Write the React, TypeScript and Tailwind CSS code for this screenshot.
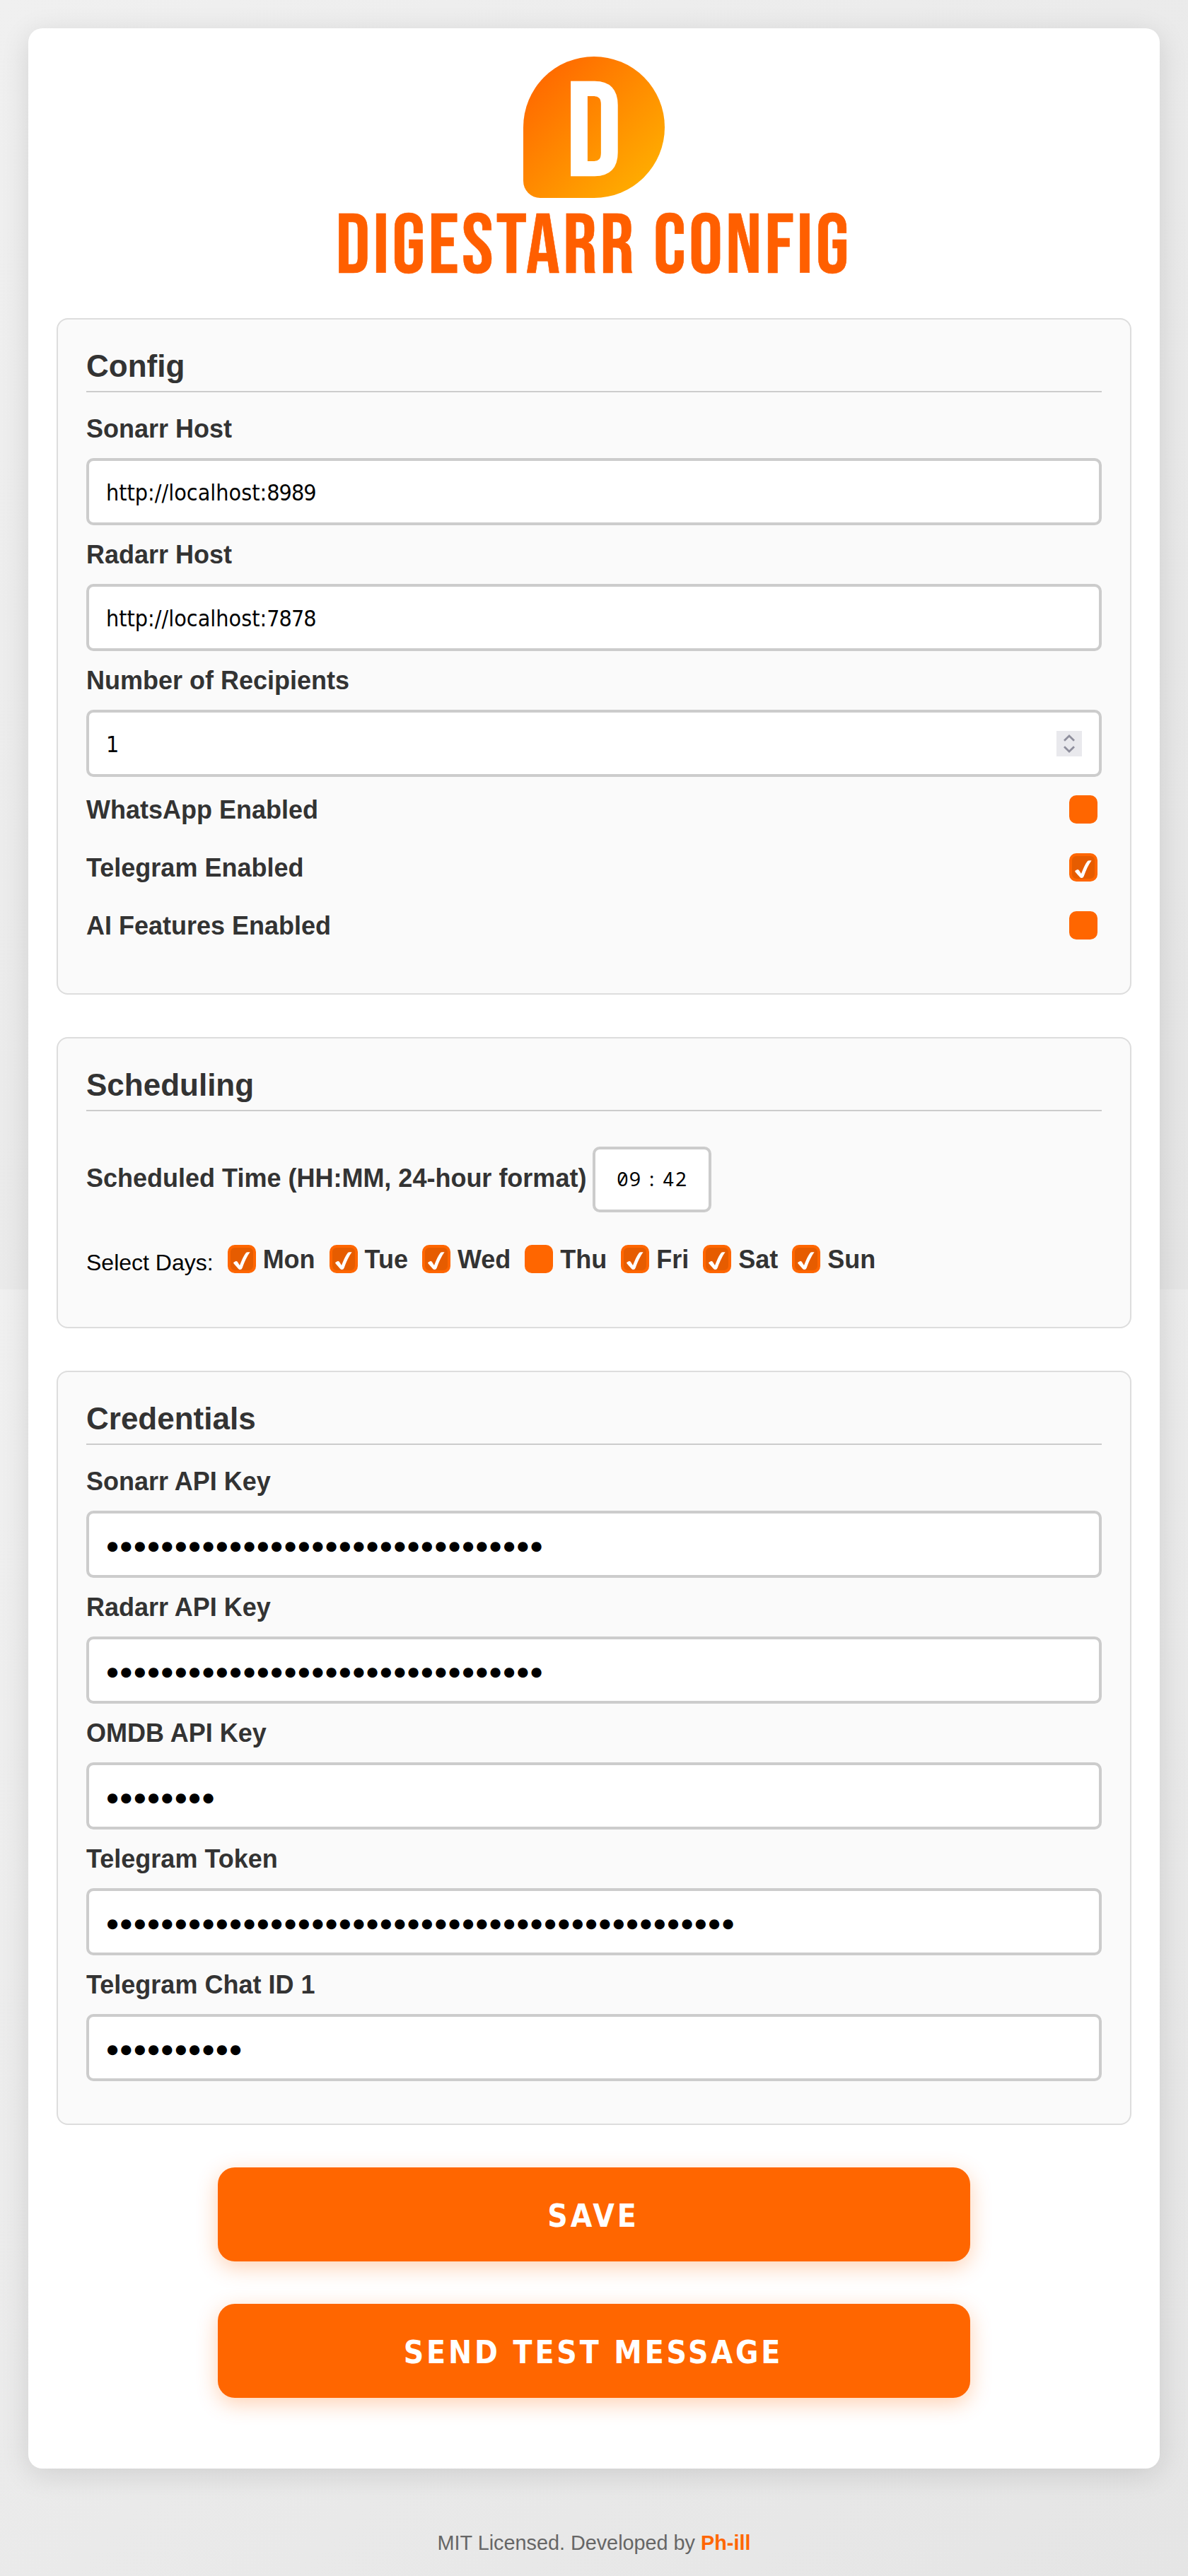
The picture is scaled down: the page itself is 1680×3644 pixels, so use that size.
import type { ReactNode } from "react";

function Section({ title, children }: { title: string; children: ReactNode }) {
  return (
    <section className="rounded-2xl border-2 border-[#ddd] bg-[#fafafa] px-10 pt-[41px]">
      <h2 className="border-b-2 border-[#ccc] pb-2.5 text-[44px] leading-[50px] font-bold text-[#333]">{title}</h2>
      {children}
    </section>
  );
}

function Field({ label, children }: { label: string; children: ReactNode }) {
  return (
    <div className="flex flex-col gap-[21px]">
      <label className="text-[36px] leading-10 font-bold text-[#333]">{label}</label>
      <div className="flex h-[95px] items-center justify-between rounded-[10px] border-4 border-[#ccc] bg-white px-6 font-['DejaVu_Sans_Condensed','DejaVu_Sans',sans-serif] text-[32px] leading-10 text-black">
        {children}
      </div>
    </div>
  );
}

function Host({ base, port }: { base: string; port: string }) {
  return (
    <span className="pt-[3px]">
      {base}
      <span className="tracking-[-0.9px]">{port}</span>
    </span>
  );
}

function Secret({ length }: { length: number }) {
  return (
    <span className="pt-1 pl-px font-['DejaVu_Sans',sans-serif] text-[18.5px] tracking-[3.2px]">{"●".repeat(length)}</span>
  );
}

function Stepper() {
  return (
    <svg className="size-9 bg-[#e9e9ed]" viewBox="0 0 36 36" fill="none" stroke="#8f8f9d" strokeWidth="2.8">
      <path d="M11 13.7 18 7l7 6.7" />
      <path d="M11 22.3 18 29l7-6.7" />
    </svg>
  );
}

function Check({ on }: { on: boolean }) {
  return (
    <span
      className={
        on
          ? "block size-10 rounded-[10px] border-4 border-[#f60] bg-[#e65c00]"
          : "block size-10 rounded-[10px] border-4 border-[#f60] bg-[#f60]"
      }
    >
      {on && (
        <svg className="size-8" viewBox="4 4 32 32" fill="#fff">
          <path d="M8.4 24.8 11 23.2Q13 22.6 14.2 24.5L17 29C19.7 22 22.3 15.7 25.6 11.4Q26.6 10.2 28.5 10.2L31.6 10.3C27.3 16 23.8 24 20.7 32.4Q19.8 35 17.5 35 16 35 15 33.8L8.6 26.4Q7.9 25.3 8.4 24.8Z" />
        </svg>
      )}
    </span>
  );
}

const toggles = [
  { label: "WhatsApp Enabled", on: false },
  { label: "Telegram Enabled", on: true },
  { label: "AI Features Enabled", on: false },
];

const days = [
  { label: "Mon", on: true },
  { label: "Tue", on: true },
  { label: "Wed", on: true },
  { label: "Thu", on: false },
  { label: "Fri", on: true },
  { label: "Sat", on: true },
  { label: "Sun", on: true },
];

const secrets = [
  { label: "Sonarr API Key", length: 32 },
  { label: "Radarr API Key", length: 32 },
  { label: "OMDB API Key", length: 8 },
  { label: "Telegram Token", length: 46 },
  { label: "Telegram Chat ID 1", length: 10 },
];

function ActionButton({ children }: { children: string }) {
  return (
    <button className="h-[133px] w-[1064px] rounded-3xl bg-[#f60] pt-[5px] pr-[2px] font-['DejaVu_Sans_Condensed','DejaVu_Sans',sans-serif] text-[44px] leading-none font-bold tracking-[3.9px] text-white shadow-[0_8px_30px_rgba(255,102,0,0.3)]">
      {children}
    </button>
  );
}

export default function App() {
  return (
    <div className="h-[3644px] w-[1680px] bg-[linear-gradient(135deg,#f0f0f0,#e5e5e5)] bg-[length:1680px_1824px] px-10 pt-10 font-['Liberation_Sans',Arial,sans-serif]">
      <main className="flex h-[3452px] flex-col rounded-[20px] bg-white px-10 pt-10 shadow-[0_8px_40px_rgba(0,0,0,0.12)]">
        <header className="flex h-[370px] flex-col items-center">
          <svg className="size-[200px] shrink-0" viewBox="0 0 200 200">
            <defs>
              <linearGradient id="badge" x1="0" y1="0" x2="1" y2="1">
                <stop offset="0" stopColor="#ff5f00" />
                <stop offset="1" stopColor="#ffb700" />
              </linearGradient>
            </defs>
            <path d="M100 0a100 100 0 0 1 0 200H24A24 24 0 0 1 0 176V100A100 100 0 0 1 100 0Z" fill="url(#badge)" />
            <text
              x="59"
              y="168"
              transform="scale(1.025 1)"
              fill="#fff"
              stroke="#fff"
              strokeWidth="2.5"
              fontSize="188"
              fontFamily="'Bebas Neue', Oswald, sans-serif"
            >
              D
            </text>
          </svg>
          <h1 className="mt-[10px] pr-px font-['Bebas_Neue',Oswald,sans-serif] text-[120px] leading-[120px] font-normal tracking-[4px] whitespace-nowrap text-[#ff5f00] [-webkit-text-stroke:0.6px_#ff5f00]">
            DIGESTARR CONFIG
          </h1>
        </header>

        <div className="flex flex-col gap-[60px]">
          <Section title="Config">
            <div className="mt-8 flex flex-col gap-[22px]">
              <Field label="Sonarr Host">
                <Host base="http://localhost:" port="8989" />
              </Field>
              <Field label="Radarr Host">
                <Host base="http://localhost:" port="7878" />
              </Field>
              <Field label="Number of Recipients">
                <span className="pt-[3px]">1</span>
                <Stepper />
              </Field>
            </div>
            <div className="mt-[26px] mb-[76px] flex flex-col gap-[42px]">
              {toggles.map((t) => (
                <div key={t.label} className="flex h-10 items-center justify-between pr-1.5">
                  <span className="pt-0.5 text-[36px] leading-10 font-bold text-[#333]">{t.label}</span>
                  <Check on={t.on} />
                </div>
              ))}
            </div>
          </Section>

          <Section title="Scheduling">
            <div className="mt-[50px] flex h-[93px] items-center">
              <span className="w-[716px] pb-1 text-[36px] leading-10 font-bold whitespace-nowrap text-[#333]">
                Scheduled Time (HH:MM, 24-hour format)
              </span>
              <div className="flex h-[93px] w-[168px] items-center justify-center rounded-[10px] border-4 border-[#ccc] bg-white pb-1 font-['Noto_Sans_Mono',monospace] text-[28px] leading-10 tracking-[0.8px] text-black">
                <span>09</span>
                <span className="mx-[6px]">:</span>
                <span>42</span>
              </div>
            </div>
            <div className="mt-[46px] mb-[76px] flex h-10 items-center gap-5">
              <span className="pt-2.5 text-[32px] leading-10 text-black">Select Days:</span>
              {days.map((d) => (
                <span key={d.label} className="flex h-10 items-center gap-2.5">
                  <Check on={d.on} />
                  <span className="pt-0.5 text-[36px] leading-10 font-bold text-[#333]">{d.label}</span>
                </span>
              ))}
            </div>
          </Section>

          <Section title="Credentials">
            <div className="mt-8 mb-[60px] flex flex-col gap-[22px]">
              {secrets.map((s) => (
                <Field key={s.label} label={s.label}>
                  <Secret length={s.length} />
                </Field>
              ))}
            </div>
          </Section>

          <div className="flex flex-col items-center gap-[60px]">
            <ActionButton>SAVE</ActionButton>
            <ActionButton>SEND TEST MESSAGE</ActionButton>
          </div>
        </div>
      </main>
      <footer className="pt-[85px] text-center text-[28.8px] leading-10 text-[#666]">
        MIT Licensed. Developed by <a className="font-bold text-[#f60]">Ph-ill</a>
      </footer>
    </div>
  );
}
